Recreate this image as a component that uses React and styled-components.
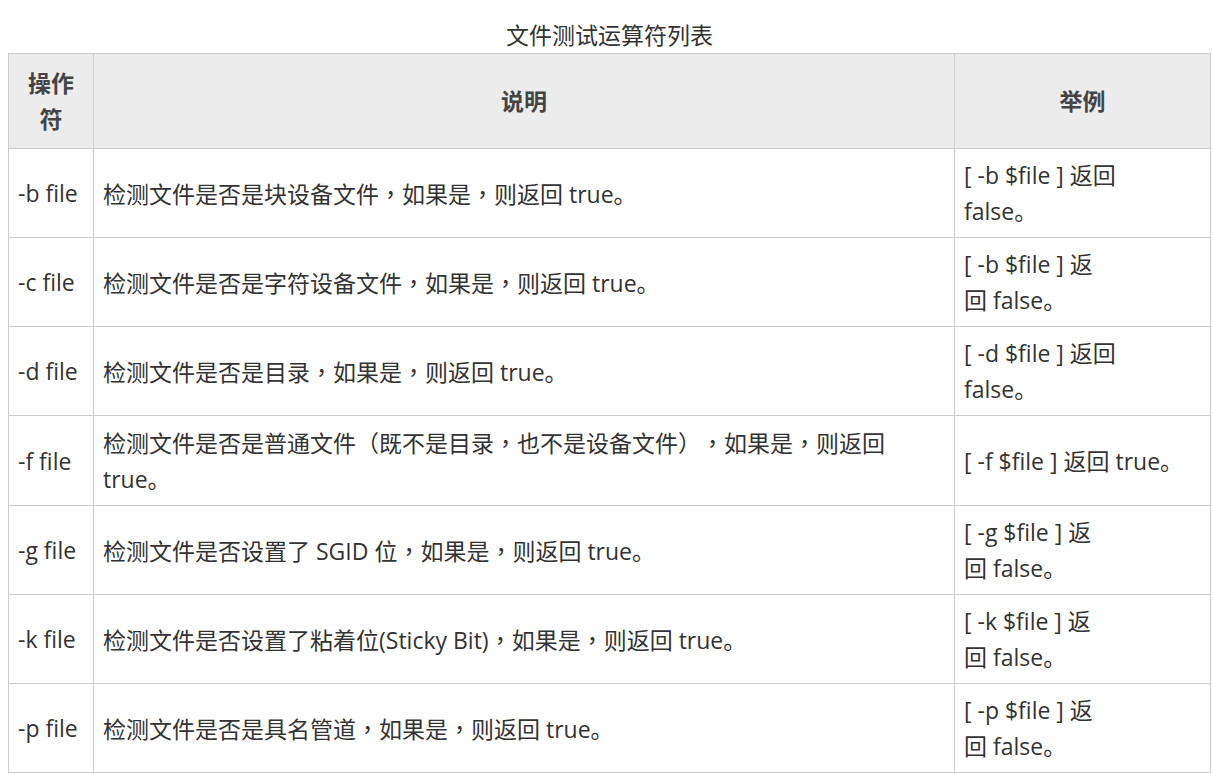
import styled, { createGlobalStyle } from "styled-components"

const GlobalStyle = createGlobalStyle`
    body {
        margin: 0;
        background: #fff;
        font-family: "Open Sans", "Noto Sans CJK SC", sans-serif;
        color: #333;
    }
`

const Page = styled.div`
    padding: 17px 3px 0 8px;
`

const Table = styled.table`
    width: 1202px;
    border-collapse: collapse;
    table-layout: fixed;
    font-size: 23px;
    line-height: 36px;
    text-spacing-trim: space-all;
`

const Caption = styled.caption`
    font-size: 23px;
    line-height: 36px;
    color: #333;
`

const HeadCell = styled.th`
    background: #ececec;
    border: 1px solid #cccccc;
    padding: 11px 9px;
    font-weight: 700;
    color: #444;
    text-align: center;
    vertical-align: middle;
`

const Cell = styled.td`
    border: 1px solid #cccccc;
    padding: 8px 9px;
    vertical-align: middle;
    text-align: left;
    white-space: ${p => (p.$nowrap ? "nowrap" : "normal")};
`

// full-width comma and brackets sit centred in the em box
const Punct = styled.span.attrs({ lang: "zh-TW" })`
    font-family: "Noto Sans CJK TC", sans-serif;
`

const rows = [
    { op: "-b file", desc: "检测文件是否是块设备文件，如果是，则返回 true。", ex: ["[ -b $file ] 返回", "false。"] },
    { op: "-c file", desc: "检测文件是否是字符设备文件，如果是，则返回 true。", ex: ["[ -b $file ] 返", "回 false。"] },
    { op: "-d file", desc: "检测文件是否是目录，如果是，则返回 true。", ex: ["[ -d $file ] 返回", "false。"] },
    { op: "-f file", desc: ["检测文件是否是普通文件（既不是目录，也不是设备文件），如果是，则返回", "true。"], ex: ["[ -f $file ] 返回 true。"] },
    { op: "-g file", desc: "检测文件是否设置了 SGID 位，如果是，则返回 true。", ex: ["[ -g $file ] 返", "回 false。"] },
    { op: "-k file", desc: "检测文件是否设置了粘着位(Sticky Bit)，如果是，则返回 true。", ex: ["[ -k $file ] 返", "回 false。"] },
    { op: "-p file", desc: "检测文件是否是具名管道，如果是，则返回 true。", ex: ["[ -p $file ] 返", "回 false。"] },
]

const Text = ({ children }) =>
    children.split(/([，（）])/).map((part, i) =>
        /^[，（）]$/.test(part) ? <Punct key={i}>{part}</Punct> : part
    )

const Lines = ({ lines }) => {
    const list = Array.isArray(lines) ? lines : [lines]
    return list.map((l, i) => (
        <span key={i}>
            {i > 0 && <br />}
            <Text>{l}</Text>
        </span>
    ))
}

export default function App() {
    return (
        <Page>
            <GlobalStyle />
            <Table>
                <Caption>文件测试运算符列表</Caption>
                <colgroup>
                    <col style={{ width: "85px" }} />
                    <col style={{ width: "861px" }} />
                    <col style={{ width: "256px" }} />
                </colgroup>
                <thead>
                    <tr>
                        <HeadCell>操作<br />符</HeadCell>
                        <HeadCell>说明</HeadCell>
                        <HeadCell>举例</HeadCell>
                    </tr>
                </thead>
                <tbody>
                    {rows.map(r => (
                        <tr key={r.op}>
                            <Cell $nowrap>{r.op}</Cell>
                            <Cell><Lines lines={r.desc} /></Cell>
                            <Cell $nowrap><Lines lines={r.ex} /></Cell>
                        </tr>
                    ))}
                </tbody>
            </Table>
        </Page>
    )
}
